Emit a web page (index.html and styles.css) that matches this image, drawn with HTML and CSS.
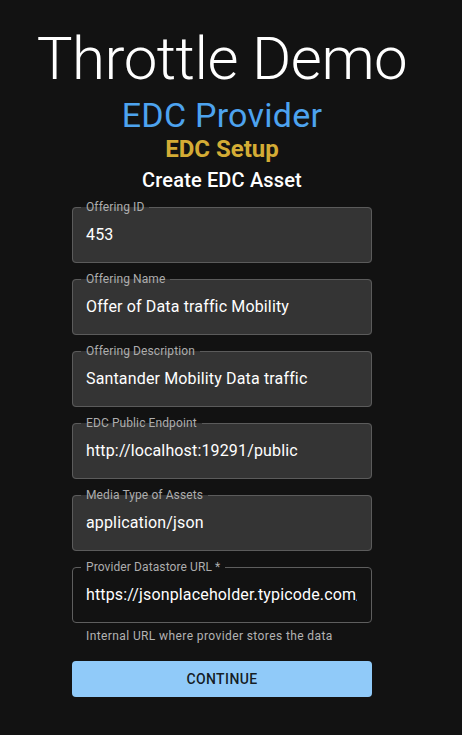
FILE: index.html
```html
<!DOCTYPE html>
<html lang="en">
<head>
<meta charset="utf-8">
<title>Throttle Demo</title>
<link rel="stylesheet" href="styles.css">
</head>
<body>
<main class="page">
  <h1 class="title">Throttle Demo</h1>
  <h2 class="subtitle">EDC Provider</h2>
  <h3 class="section">EDC Setup</h3>
  <h4 class="step">Create EDC Asset</h4>
  <form class="form">
    <fieldset class="field field-disabled">
      <legend class="field-label">Offering ID</legend>
      <div class="field-value">453</div>
    </fieldset>
    <fieldset class="field field-disabled">
      <legend class="field-label">Offering Name</legend>
      <div class="field-value">Offer of Data traffic Mobility</div>
    </fieldset>
    <fieldset class="field field-disabled">
      <legend class="field-label">Offering Description</legend>
      <div class="field-value">Santander Mobility Data traffic</div>
    </fieldset>
    <fieldset class="field field-disabled">
      <legend class="field-label">EDC Public Endpoint</legend>
      <div class="field-value">http://localhost:19291/public</div>
    </fieldset>
    <fieldset class="field field-disabled">
      <legend class="field-label">Media Type of Assets</legend>
      <div class="field-value">application/json</div>
    </fieldset>
    <div class="field-group">
      <fieldset class="field field-active">
        <legend class="field-label">Provider Datastore URL *</legend>
        <div class="field-value field-clip">https://jsonplaceholder.typicode.com/posts</div>
      </fieldset>
      <p class="helper">Internal URL where provider stores the data</p>
    </div>
    <button type="button" class="btn">Continue</button>
  </form>
</main>
</body>
</html>
```
FILE: styles.css
```css
html, body {
  margin: 0;
  padding: 0;
  background: #121212;
}
body {
  font-family: Roboto, "Noto Sans", "Liberation Sans", sans-serif;
  color: #fff;
}
.page {
  width: 444px;
  display: flex;
  flex-direction: column;
  align-items: center;
  padding-top: 23px;
}
.title {
  margin: 0;
  font-size: 60px;
  line-height: 72px;
  font-weight: 300;
  letter-spacing: -0.5px;
  color: #fff;
}
.subtitle {
  margin: 0;
  font-size: 34px;
  line-height: 40px;
  font-weight: 400;
  letter-spacing: 0.25px;
  color: #4da3ef;
}
.section {
  margin: 0;
  font-size: 24px;
  line-height: 28px;
  font-weight: 700;
  color: #d4ac35;
}
.step {
  margin: 3px 0 0;
  font-size: 20px;
  line-height: 28px;
  font-weight: 500;
  letter-spacing: 0.15px;
  color: #fff;
}
.form {
  width: 300px;
  margin-top: 7px;
  display: flex;
  flex-direction: column;
  gap: 10px;
}
.field {
  margin: 0;
  padding: 0 14px 6px 8px;
  min-width: 0;
  border: 1px solid #5b5b5b;
  border-radius: 4px;
  background: #343434;
}
.field-active {
  background: transparent;
  border-color: #5e5e5e;
}
.field-label {
  padding: 0 5px;
  font-size: 12px;
  line-height: 13px;
  letter-spacing: 0.1px;
  color: #adadad;
}
.field-value {
  padding: 0 0 0 5px;
  height: 42px;
  line-height: 42px;
  font-size: 16px;
  letter-spacing: 0.15px;
  color: #fff;
  white-space: nowrap;
  overflow: hidden;
}
.field-clip {
  text-overflow: clip;
}
.helper {
  margin: 3px 0 0 14px;
  font-size: 12px;
  line-height: 20px;
  letter-spacing: 0.4px;
  color: #b3b3b3;
}
.btn {
  margin-top: 5px;
  height: 36px;
  border: none;
  border-radius: 4px;
  background: #90caf9;
  color: rgba(0, 0, 0, 0.87);
  font-family: Roboto, "Noto Sans", "Liberation Sans", sans-serif;
  font-size: 14px;
  font-weight: 500;
  letter-spacing: 0.4px;
  text-transform: uppercase;
}
```
